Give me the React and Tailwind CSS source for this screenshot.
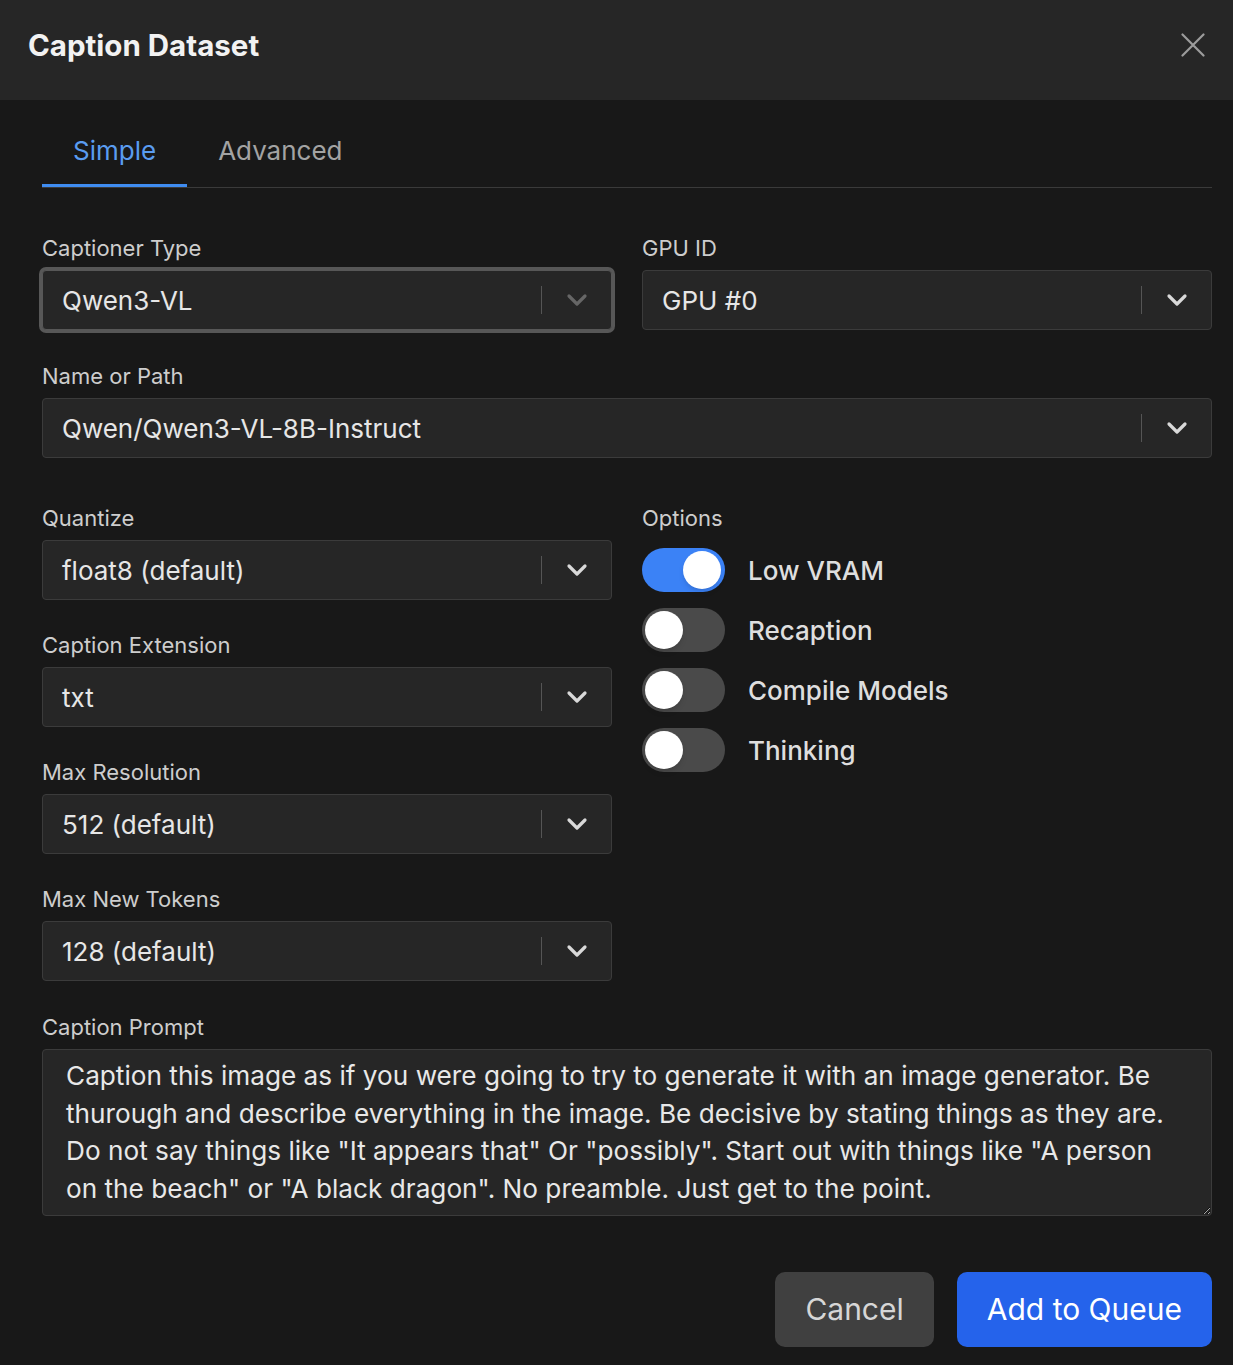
import React, { useState } from 'react';

const PROMPT =
  'Caption this image as if you were going to try to generate it with an image generator. Be thurough and describe everything in the image. Be decisive by stating things as they are. Do not say things like "It appears that" Or "possibly". Start out with things like "A person on the beach" or "A black dragon". No preamble. Just get to the point.';

const Chevron = ({ dim }) => (
  <svg width="22" height="14" viewBox="0 0 22 14" fill="none">
    <path
      d="M3 3l8 8 8-8"
      stroke={dim ? '#666666' : '#d9d9d9'}
      strokeWidth="3.2"
      strokeLinecap="round"
      strokeLinejoin="round"
    />
  </svg>
);

const Field = ({ label, className = '', children }) => (
  <div className={className}>
    <div className="text-[22px] leading-[28px] text-[#cdcdcd] mb-[8px]">{label}</div>
    {children}
  </div>
);

// Fake react-select style box
const SelectBox = ({ value, focused = false }) => (
  <div
    className={`flex items-center h-[60px] rounded-[4px] bg-[#262626] border ${
      focused ? 'border-[#575757] ring-[3px] ring-[#575757]' : 'border-[#3b3b3b]'
    }`}
  >
    <div className="flex-1 pl-[19px] text-[26px] text-[#e6e6e6] truncate">{value}</div>
    <div className="w-px h-[28px] bg-[#555555]" />
    <div className="w-[69px] flex items-center justify-center">
      <Chevron dim={focused} />
    </div>
  </div>
);

const Toggle = ({ label, on }) => (
  <div className="flex items-center h-[44px]">
    <div
      className={`relative w-[83px] h-[44px] rounded-full ${on ? 'bg-[#3b82f6]' : 'bg-[#4a4a4a]'}`}
    >
      <div
        className={`absolute top-[3px] w-[38px] h-[38px] rounded-full bg-white shadow-md ${
          on ? 'right-[4px]' : 'left-[3px]'
        }`}
      />
    </div>
    <span className="ml-[23px] font-medium text-[26px] text-[#dedede]">{label}</span>
  </div>
);

export default function App() {
  const [tab, setTab] = useState('simple');

  return (
    <div className="w-[1233px] h-[1365px] bg-[#181818] font-['Inter',sans-serif] flex flex-col">
      {/* Header */}
      <div className="h-[100px] shrink-0 bg-[#262626] flex items-center justify-between pl-[28px] pr-[28px] pb-[10px]">
        <h1 className="font-bold text-[29.5px] text-[#f2f2f2]">Caption Dataset</h1>
        <svg width="24" height="24" viewBox="0 0 24 24" fill="none">
          <path d="M1.5 1.5l21 21M22.5 1.5l-21 21" stroke="#9c9c9c" strokeWidth="2.2" strokeLinecap="round" />
        </svg>
      </div>

      {/* Body */}
      <div className="flex-1 flex flex-col pl-[42px] pr-[21px] pt-[12px] pb-[18px]">
        {/* Tabs */}
        <div className="flex border-b border-[#3a3a3a]">
          <button
            onClick={() => setTab('simple')}
            className={`h-[75px] pt-[4px] px-[31px] text-[26px] border-b-[3px] ${
              tab === 'simple' ? 'border-[#3f8cf0] text-[#5a9cf0]' : 'border-transparent text-[#a3a3a3]'
            }`}
          >
            Simple
          </button>
          <button
            onClick={() => setTab('advanced')}
            className={`h-[75px] pt-[4px] px-[31px] text-[26px] border-b-[3px] ${
              tab === 'advanced' ? 'border-[#3f8cf0] text-[#5a9cf0]' : 'border-transparent text-[#a3a3a3]'
            }`}
          >
            Advanced
          </button>
        </div>

        {/* Row 1 */}
        <div className="grid grid-cols-2 gap-x-[30px] mt-[46px]">
          <Field label="Captioner Type">
            <SelectBox value="Qwen3-VL" focused />
          </Field>
          <Field label="GPU ID">
            <SelectBox value="GPU #0" />
          </Field>
        </div>

        <Field label="Name or Path" className="mt-[32px]">
          <SelectBox value="Qwen/Qwen3-VL-8B-Instruct" />
        </Field>

        {/* Row 3 */}
        <div className="grid grid-cols-2 gap-x-[30px] mt-[46px]">
          <div className="flex flex-col gap-y-[31px]">
            <Field label="Quantize">
              <SelectBox value="float8 (default)" />
            </Field>
            <Field label="Caption Extension">
              <SelectBox value="txt" />
            </Field>
            <Field label="Max Resolution">
              <SelectBox value="512 (default)" />
            </Field>
            <Field label="Max New Tokens">
              <SelectBox value="128 (default)" />
            </Field>
          </div>
          <div>
            <div className="text-[22px] leading-[28px] text-[#cdcdcd]">Options</div>
            <div className="flex flex-col gap-y-[16px] mt-[16px]">
              <Toggle label="Low VRAM" on />
              <Toggle label="Recaption" />
              <Toggle label="Compile Models" />
              <Toggle label="Thinking" />
            </div>
          </div>
        </div>

        <Field label="Caption Prompt" className="mt-[32px]">
          <textarea
            defaultValue={PROMPT}
            className="block w-full h-[167px] rounded-[4px] bg-[#262626] border border-[#3b3b3b] pl-[23px] pr-[30px] pt-[7px] text-[26.2px] leading-[37.5px] text-[#e8e8e8] outline-none"
          />
        </Field>

        {/* Footer */}
        <div className="mt-auto flex justify-end gap-x-[23px]">
          <button className="h-[75px] px-[30px] rounded-[10px] bg-[#404040] text-[30px] text-[#d6d6d6]">
            Cancel
          </button>
          <button className="h-[75px] px-[30px] rounded-[10px] bg-[#2563eb] text-[30px] text-white">
            Add to Queue
          </button>
        </div>
      </div>
    </div>
  );
}
